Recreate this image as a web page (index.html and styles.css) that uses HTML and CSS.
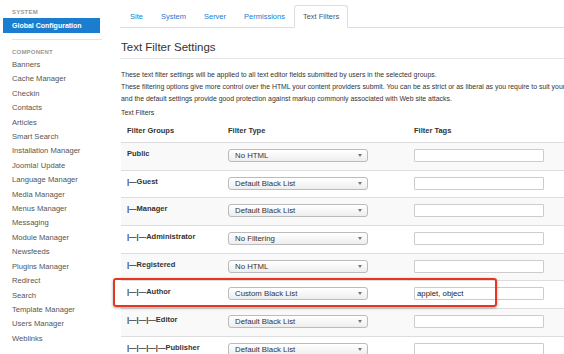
FILE: index.html
```html
<!DOCTYPE html>
<html lang="en">
<head>
  <meta charset="UTF-8">
  <title>Global Configuration - Text Filters</title>
  <link rel="stylesheet" href="styles.css">
</head>
<body>
  <div class="layout">
    <aside class="sidebar">
      <div class="nav-header">System</div>
      <a class="nav-active" href="#">Global Configuration</a>
      <div class="divider"></div>
      <div class="nav-header">Component</div>
      <ul class="nav-list">
        <li>Banners</li>
        <li>Cache Manager</li>
        <li>Checkin</li>
        <li>Contacts</li>
        <li>Articles</li>
        <li>Smart Search</li>
        <li>Installation Manager</li>
        <li>Joomla! Update</li>
        <li>Language Manager</li>
        <li>Media Manager</li>
        <li>Menus Manager</li>
        <li>Messaging</li>
        <li>Module Manager</li>
        <li>Newsfeeds</li>
        <li>Plugins Manager</li>
        <li>Redirect</li>
        <li>Search</li>
        <li>Template Manager</li>
        <li>Users Manager</li>
        <li>Weblinks</li>
      </ul>
    </aside>

    <main class="content">
      <ul class="tabs">
        <li><a href="#">Site</a></li>
        <li><a href="#">System</a></li>
        <li><a href="#">Server</a></li>
        <li><a href="#">Permissions</a></li>
        <li class="active"><a href="#">Text Filters</a></li>
      </ul>

      <h2>Text Filter Settings</h2>
      <p class="desc">
        These text filter settings will be applied to all text editor fields submitted by users in the selected groups.<br>
        These filtering options give more control over the HTML your content providers submit. You can be as strict or as liberal as you require to suit your site's needs. The filters are opt-in<br>
        and the default settings provide good protection against markup commonly associated with Web site attacks.
      </p>
      <div class="section-label">Text Filters</div>

      <div class="table-wrap">
        <table class="filters">
          <colgroup>
            <col class="col-group">
            <col class="col-type">
            <col class="col-tags">
          </colgroup>
          <thead>
            <tr><th>Filter Groups</th><th>Filter Type</th><th>Filter Tags</th></tr>
          </thead>
          <tbody>
            <tr>
              <td class="group">Public</td>
              <td><span class="select"><select><option>No HTML</option></select></span></td>
              <td><input type="text" value=""></td>
            </tr>
            <tr>
              <td class="group">|&mdash;Guest</td>
              <td><span class="select"><select><option>Default Black List</option></select></span></td>
              <td><input type="text" value=""></td>
            </tr>
            <tr>
              <td class="group">|&mdash;Manager</td>
              <td><span class="select"><select><option>Default Black List</option></select></span></td>
              <td><input type="text" value=""></td>
            </tr>
            <tr>
              <td class="group">|&mdash;|&mdash;Administrator</td>
              <td><span class="select"><select><option>No Filtering</option></select></span></td>
              <td><input type="text" value=""></td>
            </tr>
            <tr>
              <td class="group">|&mdash;Registered</td>
              <td><span class="select"><select><option>No HTML</option></select></span></td>
              <td><input type="text" value=""></td>
            </tr>
            <tr>
              <td class="group">|&mdash;|&mdash;Author</td>
              <td><span class="select"><select><option>Custom Black List</option></select></span></td>
              <td><input type="text" value="applet, object"></td>
            </tr>
            <tr>
              <td class="group">|&mdash;|&mdash;|&mdash;Editor</td>
              <td><span class="select"><select><option>Default Black List</option></select></span></td>
              <td><input type="text" value=""></td>
            </tr>
            <tr>
              <td class="group">|&mdash;|&mdash;|&mdash;|&mdash;Publisher</td>
              <td><span class="select"><select><option>Default Black List</option></select></span></td>
              <td><input type="text" value=""></td>
            </tr>
          </tbody>
        </table>
        <div class="highlight"></div>
      </div>
    </main>
  </div>
</body>
</html>
```

FILE: styles.css
```css
body {
  margin: 0;
  font-family: "Liberation Sans", Arial, sans-serif;
  color: #333;
  background: #fff;
  height: 354px;
  overflow: hidden;
}
.layout {
  display: flex;
}

/* sidebar */
.sidebar {
  width: 110px;
  flex: none;
  padding-top: 6px;
}
.nav-header {
  font-size: 6px;
  font-weight: bold;
  color: #999;
  text-transform: uppercase;
  letter-spacing: 0.2px;
  line-height: 12px;
  padding-left: 12px;
}
.nav-active {
  display: block;
  margin-left: 3px;
  width: 88px;
  padding-left: 9px;
  background: #1a7dcf;
  color: #fff;
  font-size: 7px;
  font-weight: bold;
  line-height: 15px;
  text-decoration: none;
}
.divider {
  height: 1px;
  background: #e5e5e5;
  margin: 6px 8px 6px 12px;
}
.nav-list {
  list-style: none;
  margin: 0;
  padding: 0 0 0 12px;
  font-size: 7.6px;
  line-height: 14.4px;
  color: #555;
}

/* main */
.content {
  flex: 1;
  min-width: 0;
  padding-left: 10px;
  overflow: hidden;
}
.tabs {
  display: flex;
  list-style: none;
  margin: 5px 0 0;
  padding: 0 0 0 1px;
  border-bottom: 1px solid #ddd;
}
.tabs a {
  display: block;
  padding: 5px 8px;
  line-height: 11px;
  font-size: 7.5px;
  color: #1a7dcf;
  text-decoration: none;
  border: 1px solid transparent;
  border-radius: 3px 3px 0 0;
  margin-bottom: -1px;
}
.tabs .active a {
  color: #555;
  background: #fff;
  border-color: #ddd #ddd #fff;
}
h2 {
  font-size: 11.5px;
  font-weight: normal;
  line-height: 14px;
  margin: 12px 0 0;
  padding: 0 0 4px 1px;
  border-bottom: 1px solid #e5e5e5;
}
.desc {
  font-size: 6.9px;
  line-height: 12px;
  margin: 10px 0 2px 1px;
  white-space: nowrap;
}
.section-label {
  font-size: 6.9px;
  line-height: 12px;
  margin-left: 1px;
}

/* table */
.table-wrap {
  position: relative;
  margin-left: 1px;
}
.filters {
  border-collapse: collapse;
  table-layout: fixed;
  width: 460px;
}
.col-group { width: 101px; }
.col-type { width: 186px; }
.col-tags { width: 173px; }
.filters th {
  text-align: left;
  font-size: 7.5px;
  line-height: 11px;
  padding: 6px 6px;
}
.filters td {
  padding: 6px 6px 7.7px;
  vertical-align: top;
  border-top: 1px solid #ddd;
}
.filters tbody tr:nth-child(odd) td {
  background: #f9f9f9;
}
.filters .group {
  font-size: 7.5px;
  font-weight: bold;
  line-height: 10px;
}
.select {
  display: block;
  position: relative;
  width: 140px;
}
.select select {
  display: block;
  appearance: none;
  -webkit-appearance: none;
  width: 140px;
  height: 13px;
  margin: 0;
  padding: 0 0 0 6px;
  border: 1px solid #bbb;
  border-radius: 3px;
  background: linear-gradient(#fff, #eee);
  font-family: "Liberation Sans", Arial, sans-serif;
  font-size: 7.8px;
  color: #333;
}
.select::after {
  content: "";
  position: absolute;
  right: 6px;
  top: 5px;
  border-left: 2px solid transparent;
  border-right: 2px solid transparent;
  border-top: 3px solid #777;
}
.filters input {
  display: block;
  box-sizing: border-box;
  width: 130px;
  height: 13px;
  margin: 0;
  padding: 0 2px;
  border: 1px solid #ccc;
  border-radius: 1px;
  font-family: "Liberation Sans", Arial, sans-serif;
  font-size: 7.8px;
  color: #222;
}

/* red callout around the Author row */
.highlight {
  position: absolute;
  left: -8px;
  top: 159px;
  width: 380px;
  height: 25px;
  border: 2px solid #e8351f;
  border-radius: 3px;
  box-shadow: 0 1px 3px rgba(0, 0, 0, 0.35);
}
```
